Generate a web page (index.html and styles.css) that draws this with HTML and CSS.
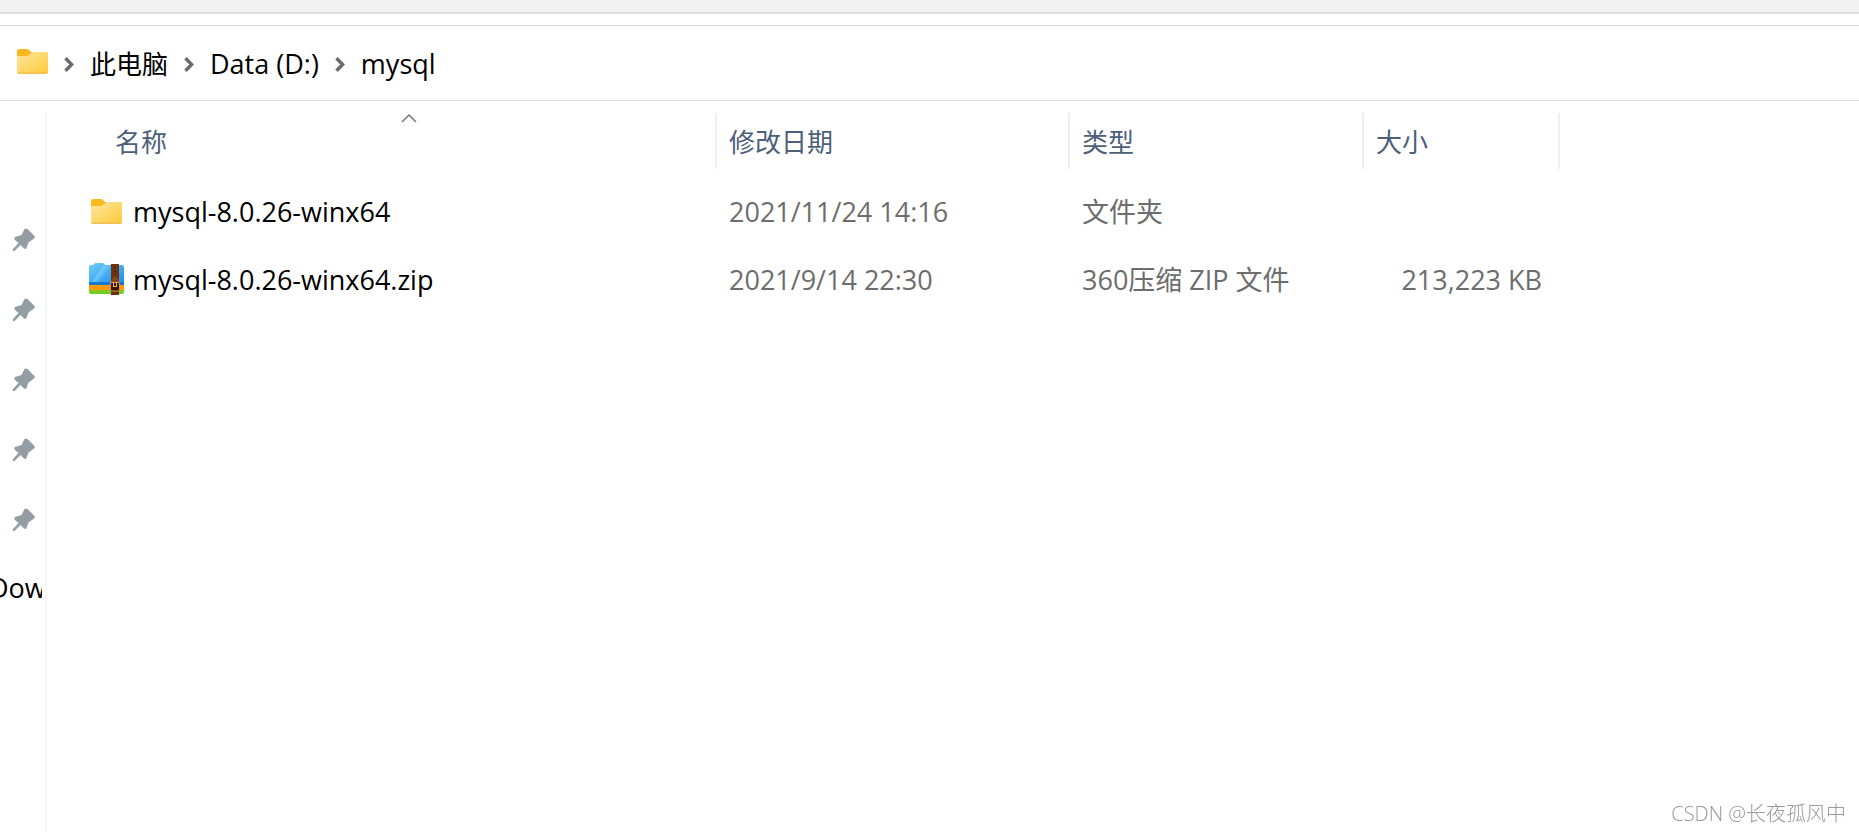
FILE: index.html
```
<!DOCTYPE html>
<html lang="zh-CN">
<head>
    <meta charset="UTF-8">
    <meta name="viewport" content="width=device-width, initial-scale=1.0">
    <title>mysql</title>
    <link rel="stylesheet" href="styles.css">
</head>
<body>
    <!-- shared icons -->
    <svg class="defs" width="0" height="0" aria-hidden="true">
        <defs>
            <linearGradient id="folderFront" x1="0" y1="0" x2="1" y2="1">
                <stop offset="0" stop-color="#ffe8a2"/>
                <stop offset="1" stop-color="#fec937"/>
            </linearGradient>
            <linearGradient id="zipBlue" x1="0" y1="0" x2="1" y2="1">
                <stop offset="0" stop-color="#6ccdfb"/>
                <stop offset="1" stop-color="#2491ea"/>
            </linearGradient>
            <symbol id="folder" viewBox="0 0 31 25">
                <path d="M0 2Q0 0 2 0H10Q11 0 12 1L14 3H29Q31 3 31 5V12H0Z" fill="#fbb91f"/>
                <path d="M0 7H9Q11 7 12 6L14 4Q15 3 16 3H29.500Q31 3 31 5V23Q31 24.500 29.500 24.500H1.500Q0 24.500 0 23Z" fill="url(#folderFront)"/>
                <path d="M0.500 23.500Q1 24.200 2 24.200H29Q30 24.200 30.500 23.500" fill="none" stroke="#e9ad3a" stroke-width="1"/>
            </symbol>
            <symbol id="zip" viewBox="0 0 35 32">
                <path d="M0 22H35V29Q35 31 33 31H2Q0 31 0 29Z" fill="#77cb22"/>
                <path d="M0 19H35V27H0Z" fill="#ff9a0a"/>
                <path d="M0 18H35V22H0Z" fill="#1778d2"/>
                <path d="M0 4Q0 2 2 2H4L6 0H14L16 2H33Q35 2 35 4V19H0Z" fill="url(#zipBlue)"/>
                <path d="M14 3H18L7 19H3Z" fill="#8bd5ff" opacity="0.550"/>
                <path d="M19 3H20L9 19H8Z" fill="#8bd5ff" opacity="0.550"/>
                <path d="M22 1H30V32H22Z" fill="#713010"/>
                <path d="M22 17L26 12L30 17V19H22Z" fill="#8c4416"/>
                <path d="M25.500 4H26.500V5H25.500ZM25.500 8H26.500V9H25.500ZM25.500 12H26.500V13H25.500Z" fill="#2b1005"/>
                <path d="M21.500 19.500H30.500V28H21.500Z" fill="#3f1405" stroke="#d19845" stroke-width="1"/>
                <path d="M24.500 19V24M27.500 19V24M24 23.500H28" fill="none" stroke="#e8bd6a" stroke-width="1"/>
            </symbol>
            <symbol id="pin" viewBox="0 0 24 24">
                <path d="M12.500 1Q14 0 15.500 1L22.500 8Q23.500 9.500 22 10.500L16.500 14.500L14.500 20Q13.500 21.500 12 20.500L8.500 17L2.500 23Q1.500 23.500 0.800 22.800Q0.300 22 1 21L6.500 15L2.500 11.500Q1.800 10 3 9L9.500 7Z" fill="#929da4"/>
            </symbol>
            <symbol id="chevron" viewBox="0 0 9 14">
                <path d="M1.200 1.200L7 7L1.200 12.800" fill="none" stroke="#6b6b6b" stroke-width="3.200"/>
            </symbol>
        </defs>
    </svg>

    <div class="topbar"></div>

    <nav class="address">
        <svg class="folder-icon"><use href="#folder"/></svg>
        <svg class="chevron"><use href="#chevron"/></svg>
        <a href="#">此电脑</a>
        <svg class="chevron"><use href="#chevron"/></svg>
        <a href="#" class="latin">Data (D:)</a>
        <svg class="chevron"><use href="#chevron"/></svg>
        <a href="#" class="latin">mysql</a>
    </nav>

    <div class="main">
        <aside class="sidebar">
            <ul>
                <li><svg class="pin"><use href="#pin"/></svg></li>
                <li><svg class="pin"><use href="#pin"/></svg></li>
                <li><svg class="pin"><use href="#pin"/></svg></li>
                <li><svg class="pin"><use href="#pin"/></svg></li>
                <li><svg class="pin"><use href="#pin"/></svg></li>
                <li class="folder-label">Dow</li>
            </ul>
        </aside>

        <main class="files">
            <table>
                <colgroup>
                    <col class="col-name">
                    <col class="col-date">
                    <col class="col-type">
                    <col class="col-size">
                </colgroup>
                <thead>
                    <tr>
                        <th aria-sort="ascending">
                            <button>名称</button>
                            <svg class="sort" viewBox="0 0 16 9"><path d="M1 8L8 1L15 8" fill="none" stroke="#777777" stroke-width="1.500"/></svg>
                        </th>
                        <th><button>修改日期</button></th>
                        <th><button>类型</button></th>
                        <th><button>大小</button></th>
                    </tr>
                </thead>
                <tbody>
                    <tr>
                        <td>
                            <a href="#" class="file">
                                <span class="icon"><svg class="folder-icon"><use href="#folder"/></svg></span>
                                mysql-8.0.26-winx64
                            </a>
                        </td>
                        <td>2021/11/24 14:16</td>
                        <td>文件夹</td>
                        <td></td>
                    </tr>
                    <tr>
                        <td>
                            <a href="#" class="file">
                                <span class="icon"><svg class="zip-icon"><use href="#zip"/></svg></span>
                                mysql-8.0.26-winx64.zip
                            </a>
                        </td>
                        <td>2021/9/14 22:30</td>
                        <td>360压缩 ZIP 文件</td>
                        <td class="size">213,223 KB</td>
                    </tr>
                </tbody>
            </table>
        </main>
    </div>

    <div class="watermark">CSDN @长夜孤风中</div>
</body>
</html>
```
FILE: styles.css
```
* {
    box-sizing: border-box;
}

body {
    margin: 0;
    min-height: 100vh;
    display: flex;
    flex-direction: column;
    background-color: white;
    color: black;
    font-family: "Open Sans", "Noto Sans CJK SC", sans-serif;
    font-size: 26px;
    line-height: 36px;
}

a {
    color: inherit;
    text-decoration: none;
}

svg {
    display: block;
    flex-shrink: 0;
}

.defs {
    position: absolute;
}

.topbar {
    height: 14px;
    background-color: #f2f2f2;
    border-bottom: 2px solid #dedede;
}

/* address bar */
.address {
    margin-top: 11px;
    height: 76px;
    padding: 2px 0 0 17px;
    display: flex;
    align-items: center;
    gap: 16px;
    border-top: 1px solid #dadada;
    border-bottom: 1px solid #dadada;
}

.address .folder-icon {
    margin-bottom: 6px;
}

.latin {
    font-size: 27px;
}

.folder-icon {
    width: 31px;
    height: 25px;
}

.chevron {
    width: 10px;
    height: 15px;
}

/* content */
.main {
    flex: 1;
    display: flex;
    padding-top: 12px;
}

.sidebar {
    width: 47px;
    border-right: 2px solid #f5f5f5;
}

.sidebar ul {
    list-style: none;
    margin: 0;
    padding: 92px 0 0;
    width: 42px;
    overflow: hidden;
}

.sidebar li {
    height: 70px;
    display: flex;
    align-items: center;
    padding-left: 12px;
}

.sidebar .folder-label {
    height: 66px;
    padding-left: 0;
    margin-left: -11px;
    font-size: 27px;
}

.pin {
    width: 24px;
    height: 24px;
}

.files {
    flex: 1;
}

table {
    table-layout: fixed;
    width: 1513px;
    border-collapse: separate;
    border-spacing: 0;
}

.col-name {
    width: 670px;
}

.col-date {
    width: 353px;
}

.col-type {
    width: 294px;
}

.col-size {
    width: 196px;
}

th {
    position: relative;
    height: 56px;
    padding: 2px 0 0 12px;
    border-right: 2px solid #efefef;
    text-align: left;
}

th:first-child {
    padding-left: 68px;
}

th button {
    padding: 0;
    border: 0;
    background: none;
    color: #4c607a;
    font: inherit;
    font-weight: 400;
}

.sort {
    position: absolute;
    top: 1px;
    right: 298px;
    width: 16px;
    height: 9px;
}

td {
    height: 68px;
    padding: 2px 18px 0 12px;
    color: #6d6d6d;
    font-size: 27px;
    white-space: nowrap;
}

td:first-child {
    padding-left: 42px;
    color: black;
}

tbody::before {
    content: "";
    display: block;
    height: 8px;
}

.file {
    display: flex;
    align-items: center;
    gap: 9px;
}

.icon {
    width: 35px;
    padding-bottom: 2px;
    display: flex;
    justify-content: center;
}

.zip-icon {
    width: 35px;
    height: 32px;
}

.size {
    text-align: right;
}

.watermark {
    position: fixed;
    right: 13px;
    bottom: 0;
    color: #999999;
    font-size: 20px;
    font-weight: 300;
}
```
